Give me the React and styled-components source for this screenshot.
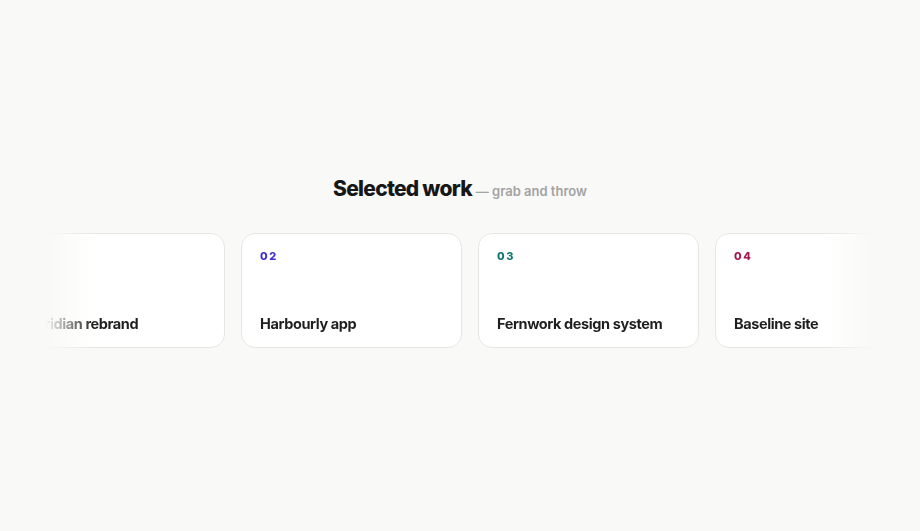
import React from "react";
import styled, { createGlobalStyle } from "styled-components";

const Global = createGlobalStyle`
  html, body { margin: 0; padding: 0; background: #f9f9f7; }
  body { font-family: Inter, "Noto Sans", sans-serif; -webkit-font-smoothing: antialiased; }
`;

const Page = styled.main`
  min-height: 100vh;
  display: flex;
  flex-direction: column;
  align-items: center;
  justify-content: center;
  gap: 31px;
  box-sizing: border-box;
  padding-bottom: 7px;
`;

const Heading = styled.h2`
  margin: 0;
  font-size: 21px;
  font-weight: 800;
  letter-spacing: -0.035em;
  color: #171717;
  line-height: 1.2;
`;

const Sub = styled.span`
  font-size: 13px;
  font-weight: 600;
  letter-spacing: 0;
  color: #a3a3a3;
`;

const Viewport = styled.div`
  width: 90%;
  overflow: hidden;
  -webkit-mask-image: linear-gradient(to right, transparent 0, #000 48px, #000 calc(100% - 48px), transparent 100%);
  mask-image: linear-gradient(to right, transparent 0, #000 48px, #000 calc(100% - 48px), transparent 100%);
`;

const Track = styled.div`
  display: flex;
  gap: 16px;
  cursor: grab;
  user-select: none;
`;

const Card = styled.article`
  flex: 0 0 221px;
  height: 115px;
  box-sizing: border-box;
  background: #fff;
  border: 1px solid #e6e6e3;
  border-radius: 14px;
  padding: 16px 18px 13px;
  display: flex;
  flex-direction: column;
  justify-content: space-between;
`;

const Num = styled.span`
  font-size: 11px;
  line-height: 13px;
  font-weight: 800;
  letter-spacing: 0.16em;
  color: ${(p) => p.$color};
`;

const Title = styled.h3`
  margin: 0;
  font-size: 14.5px;
  line-height: 20px;
  font-weight: 700;
  letter-spacing: -0.028em;
  color: #1f1f1f;
  white-space: nowrap;
`;

const items = [
  { n: "01", title: "Meridian rebrand", color: "#b45309" },
  { n: "02", title: "Harbourly app", color: "#3f2fcf" },
  { n: "03", title: "Fernwork design system", color: "#0f766e" },
  { n: "04", title: "Baseline site", color: "#a3164f" },
  { n: "05", title: "Northlight studio", color: "#4338ca" },
];

export default function App() {
  const offset = -42;
  return (
    <>
      <Global />
      <Page>
        <Heading>
          Selected work <Sub>— grab and throw</Sub>
        </Heading>
        <Viewport>
          <Track style={{ transform: `translateX(${offset}px)` }}>
            {items.map((it) => (
              <Card key={it.n}>
                <Num $color={it.color}>{it.n}</Num>
                <Title>{it.title}</Title>
              </Card>
            ))}
          </Track>
        </Viewport>
      </Page>
    </>
  );
}
